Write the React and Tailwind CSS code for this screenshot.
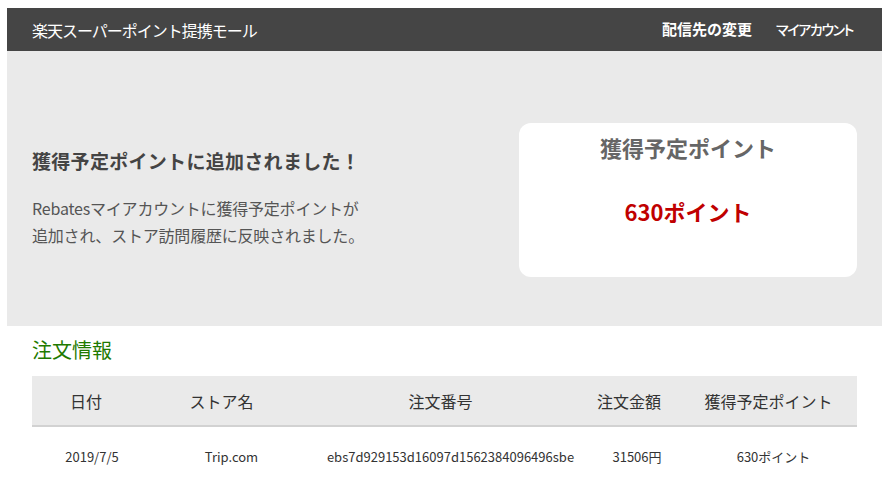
import React from 'react';

const font = { fontFamily: '"Noto Sans CJK JP", "Noto Sans", sans-serif' };

const columns = [
  { label: '日付', value: '2019/7/5', w: 'w-[118px]', hp: 'pr-[10px]', dp: 'pl-[2px]' },
  { label: 'ストア名', value: 'Trip.com', w: 'w-[155px]', hp: 'pr-[12px]', dp: 'pl-[8px]' },
  { label: '注文番号', value: 'ebs7d929153d16097d1562384096496sbe', w: 'w-[285px]', hp: 'pr-[14px]', dp: 'pl-[6px]' },
  { label: '注文金額', value: '31506円', w: 'w-[92px]', hp: 'pr-[14px]', dp: 'pl-[2px]' },
  { label: '獲得予定ポイント', value: '630ポイント', w: 'flex-1', hp: 'pr-[2px]', dp: 'pl-[8px]' },
];

const App = () => {
  return (
    <div className="pt-2 pl-[7px] w-[882px] bg-white" style={font}>
      {/* header */}
      <div className="h-[43px] bg-[#454545] flex items-center justify-between pl-[25px] pr-[29px]">
        <p className="text-[16px] text-white tracking-[-1px]">楽天スーパーポイント提携モール</p>
        <div className="flex items-center gap-[24px] text-white">
          <span className="text-[15px] font-bold">配信先の変更</span>
          <span className="text-[14px] font-medium tracking-[-1.4px] [font-feature-settings:'palt']">マイアカウント</span>
        </div>
      </div>

      {/* points added */}
      <div className="bg-[#eaeaea] flex items-center justify-between px-[25px] pt-[72px] pb-[49px]">
        <div className="pb-[5px]">
          <h2 className="text-[19px] leading-[28px] font-bold text-[#444] tracking-[0.3px]">
            獲得予定ポイントに追加されました！
          </h2>
          <p className="mt-[20px] text-[16px] leading-[27px] text-[#555] tracking-[-0.2px]">
            Rebatesマイアカウントに獲得予定ポイントが<br />
            追加され、ストア訪問履歴に反映されました。
          </p>
        </div>
        <div className="w-[338px] h-[154px] rounded-[12px] bg-white flex flex-col items-center pt-[9px]">
          <p className="text-[22px] leading-[30px] font-bold text-[#666]">獲得予定ポイント</p>
          <p className="mt-[34px] text-[22px] leading-[30px] font-bold text-[#c00000]">630ポイント</p>
        </div>
      </div>

      {/* order info */}
      <div className="px-[25px] pt-[10px]">
        <h3 className="text-[20px] leading-[28px] text-[#1f7a00]">注文情報</h3>
        <div className="mt-[12px] w-[825px]">
          <div className="flex h-[51px] bg-[#eaeaea] border-b-2 border-[#d2d2d2]">
            {columns.map((c) => (
              <div key={c.label} className={`${c.w} ${c.hp} flex items-center justify-center text-[16px] text-[#333]`}>
                {c.label}
              </div>
            ))}
          </div>
          <div className="flex h-[60px]">
            {columns.map((c) => (
              <div key={c.label} className={`${c.w} ${c.dp} flex items-center justify-center text-[13px] text-[#333]`}>
                {c.value}
              </div>
            ))}
          </div>
        </div>
      </div>
    </div>
  );
};

export default App;
